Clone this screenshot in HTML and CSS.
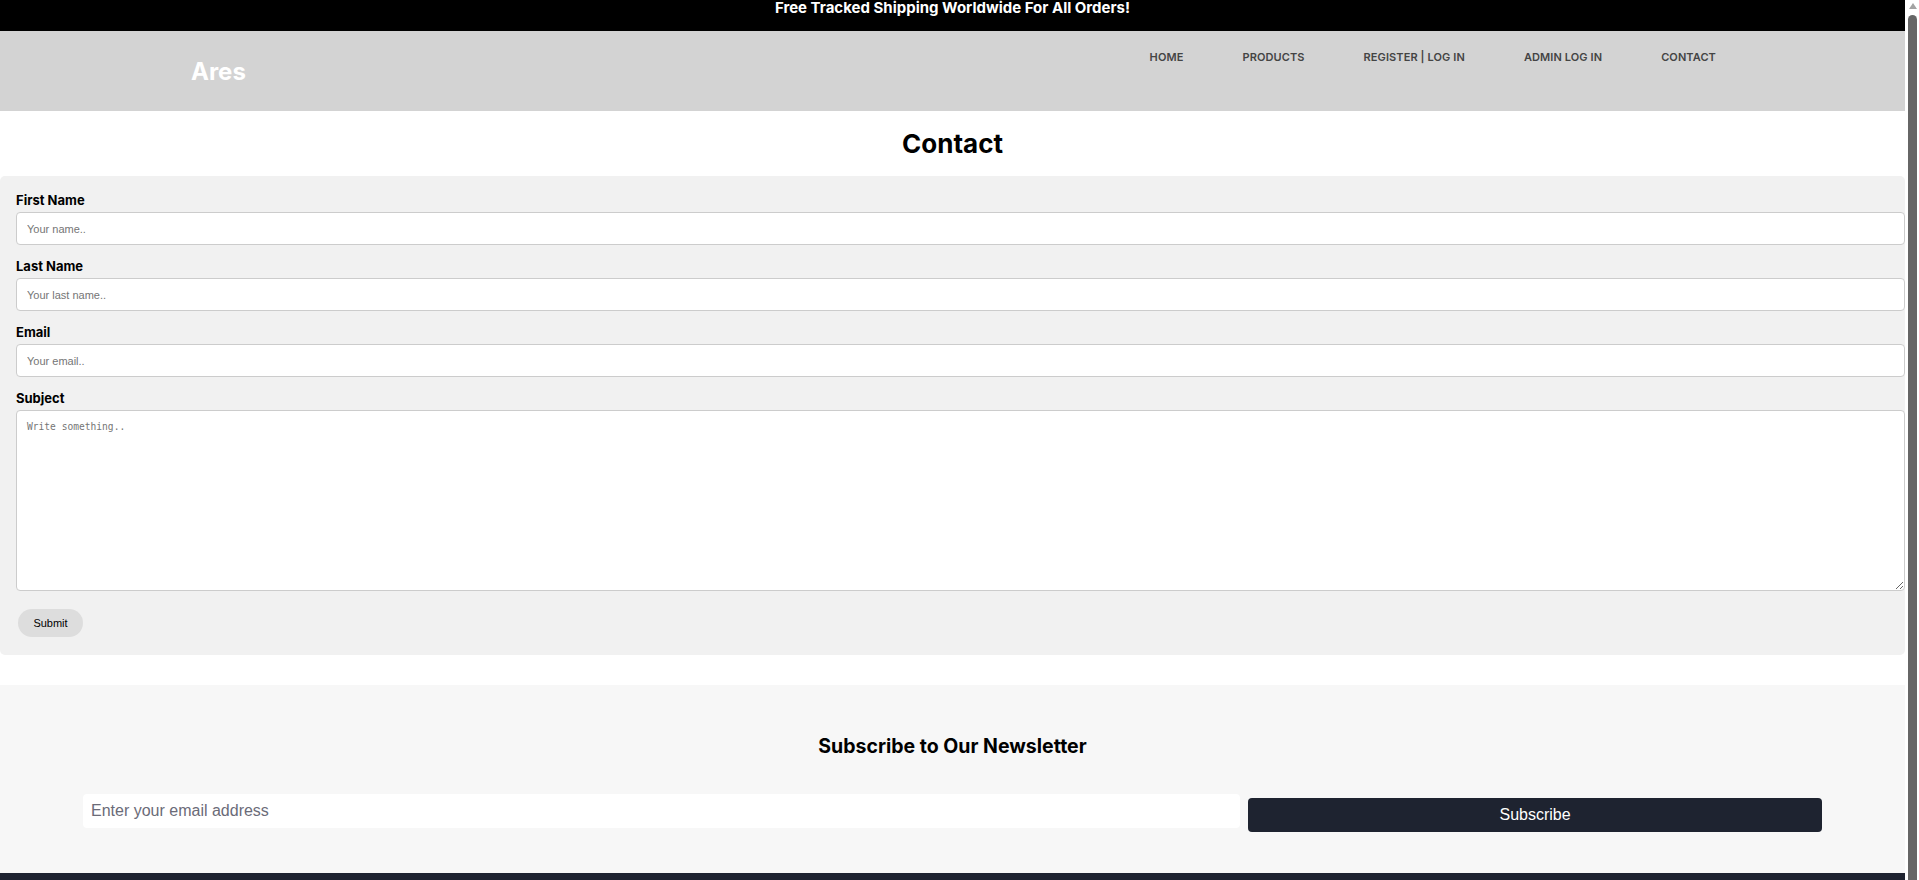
FILE: index.html
```html
<!DOCTYPE html>
<html lang="en">
<head>
<meta charset="utf-8">
<title>Contact - Ares</title>
<link rel="stylesheet" href="styles.css">
</head>
<body>
<div class="announce">Free Tracked Shipping Worldwide For All Orders!</div>
<header class="site-header">
  <div class="logo">Ares</div>
  <nav class="nav">
    <a href="#">HOME</a>
    <a href="#">PRODUCTS</a>
    <a href="#">REGISTER | LOG IN</a>
    <a href="#">ADMIN LOG IN</a>
    <a href="#">CONTACT</a>
  </nav>
</header>
<main>
  <h1 class="page-title">Contact</h1>
  <form class="contact-form">
    <label class="field-label" for="fname">First Name</label>
    <input class="field-input" id="fname" type="text" placeholder="Your name..">
    <label class="field-label" for="lname">Last Name</label>
    <input class="field-input" id="lname" type="text" placeholder="Your last name..">
    <label class="field-label" for="email">Email</label>
    <input class="field-input" id="email" type="text" placeholder="Your email..">
    <label class="field-label" for="subject">Subject</label>
    <textarea class="field-textarea" id="subject" placeholder="Write something.."></textarea>
    <button class="submit-btn" type="button">Submit</button>
  </form>
</main>
<section class="newsletter">
  <h2 class="newsletter-title">Subscribe to Our Newsletter</h2>
  <div class="newsletter-row">
    <input class="newsletter-input" type="email" placeholder="Enter your email address">
    <button class="newsletter-btn" type="button">Subscribe</button>
  </div>
</section>
<footer class="site-footer"></footer>
<div class="scrollbar" aria-hidden="true">
  <div class="scrollbar-arrow"></div>
  <div class="scrollbar-thumb"></div>
</div>
</body>
</html>
```

FILE: styles.css
```css
* {
  box-sizing: border-box;
}

html {
  scrollbar-width: none;
}

html::-webkit-scrollbar {
  display: none;
}

body {
  margin: 0 14px 0 0;
  font-family: Inter, "Liberation Sans", sans-serif;
  color: #000;
  background: #fff;
}

.announce {
  height: 31px;
  background: #000;
  color: #fff;
  font-weight: 700;
  font-size: 15px;
  line-height: 16px;
  text-align: center;
}

.site-header {
  height: 80px;
  background: #d3d3d3;
  display: flex;
  justify-content: space-between;
  align-items: flex-start;
  padding: 0 189px 0 191px;
}

.logo {
  margin-top: 26px;
  color: #fff;
  font-weight: 700;
  font-size: 24px;
  line-height: 29px;
}

.nav {
  margin-top: 20px;
  display: flex;
  gap: 59px;
}

.nav a {
  color: #444;
  text-decoration: none;
  font-size: 11px;
  font-weight: 600;
  line-height: 13px;
  letter-spacing: 0.1px;
}

.page-title {
  margin: 17px 0 17px;
  text-align: center;
  font-size: 26px;
  line-height: 31px;
  font-weight: 700;
}

.contact-form {
  display: flex;
  flex-direction: column;
  align-items: flex-start;
  background: #f1f1f1;
  border-radius: 5px;
  padding: 16px 0 18px 16px;
}

.field-label {
  font-size: 13px;
  font-weight: 700;
  line-height: 16px;
  margin-bottom: 4px;
}

.field-input {
  width: 100%;
  height: 33px;
  border: 1px solid #ccc;
  border-radius: 4px;
  background: #fff;
  padding: 0 10px;
  font-family: "Liberation Sans", Arial, sans-serif;
  font-size: 11px;
  margin: 0 0 13px;
}

.field-input::placeholder {
  color: #757575;
}

.field-textarea {
  width: 100%;
  height: 181px;
  border: 1px solid #ccc;
  border-radius: 4px;
  background: #fff;
  padding: 10px 10px;
  font-family: "DejaVu Sans Mono", "Liberation Mono", monospace;
  font-size: 9.6px;
  margin: 0;
  resize: vertical;
}

.field-textarea::placeholder {
  color: #757575;
}

.submit-btn {
  margin: 18px 0 0 2px;
  width: 65px;
  height: 28px;
  border: none;
  border-radius: 14px;
  background: #dddddd;
  color: #000;
  font-family: "Liberation Sans", Arial, sans-serif;
  font-size: 11px;
  padding: 0;
}

.newsletter {
  margin-top: 30px;
  background: #f7f7f7;
  padding: 50px 83px 41px;
}

.newsletter-title {
  margin: 0 0 36px;
  text-align: center;
  font-size: 19.5px;
  line-height: 23px;
  font-weight: 700;
}

.newsletter-row {
  display: flex;
  align-items: flex-start;
  gap: 8px;
}

.newsletter-input {
  flex: 1 1 auto;
  min-width: 0;
  height: 34px;
  border: none;
  border-radius: 4px;
  background: #fff;
  padding: 0 8px;
  font-family: "Liberation Sans", Arial, sans-serif;
  font-size: 16px;
}

.newsletter-input::placeholder {
  color: #6b6b78;
}

.newsletter-btn {
  flex: 0 0 33%;
  margin-top: 4px;
  height: 34px;
  border: none;
  border-radius: 4px;
  background: #1e2330;
  color: #fff;
  font-family: "Liberation Sans", Arial, sans-serif;
  font-size: 16px;
}

.site-footer {
  height: 60px;
  background: #1e2330;
}

.scrollbar {
  position: fixed;
  top: 0;
  right: 0;
  bottom: 0;
  width: 14px;
  background: #fff;
  display: flex;
  flex-direction: column;
  align-items: center;
  padding: 3px 1px 0 2px;
}

.scrollbar-arrow {
  width: 0;
  height: 0;
  border-left: 4px solid transparent;
  border-right: 4px solid transparent;
  border-bottom: 6px solid #a3a3a3;
}

.scrollbar-thumb {
  margin-top: 6px;
  width: 9px;
  flex: 1;
  background: #666;
  border-radius: 5px 5px 0 0;
}
```
